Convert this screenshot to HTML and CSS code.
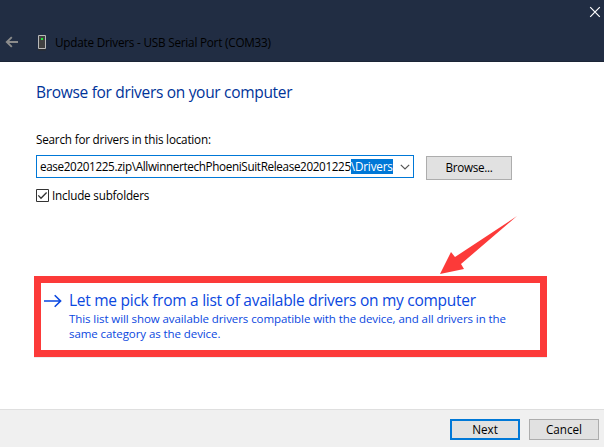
FILE: index.html
```html
<!DOCTYPE html>
<html lang="en">
<head>
<meta charset="utf-8">
<title>Update Drivers</title>
<link rel="stylesheet" href="styles.css">
</head>
<body>
<div class="window">
  <header class="titlebar">
    <div class="caption">
      <svg class="close" width="12" height="12" viewBox="0 0 12 12"><path d="M1.2 1.2 10.8 10.8M10.8 1.2 1.2 10.8"/></svg>
    </div>
    <div class="nav">
      <svg class="back" width="14" height="12" viewBox="0 0 14 12"><path d="M13 6H2M6.8 1.1 1.8 6l5 4.9"/></svg>
      <svg class="device" width="9" height="16" viewBox="0 0 9 16"><path fill="#2b2d31" d="M0 14h8v1.5H0z"/><path fill="#414141" stroke="#b9b9b9" d="M.5.5h7v13h-7z"/><path fill="#24e83c" d="M3 3h2v2H3z"/></svg>
      <span class="title">Update Drivers - USB Serial Port (COM33)</span>
    </div>
  </header>
  <main class="content">
    <h1 class="heading">Browse for drivers on your computer</h1>
    <label class="label">Search for drivers in this location:</label>
    <div class="search-row">
      <div class="combo"><span class="path">ease20201225.zip\AllwinnertechPhoeniSuitRelease20201225</span><span class="selected">\Drivers</span>
        <svg class="chevron" width="10" height="6" viewBox="0 0 10 6"><path d="M.8.8 5 5 9.2.8"/></svg>
      </div>
      <button class="button browse">Browse...</button>
    </div>
    <div class="check-row">
      <svg width="13" height="13" viewBox="0 0 13 13"><path class="box" d="M.5.5h12v12H.5z"/><path class="tick" d="M2.3 6.4 5 9.2l5.6-5.7"/></svg>
      <span>Include subfolders</span>
    </div>
    <section class="option">
      <svg class="go" width="18" height="14" viewBox="0 0 18 14"><path d="M0 7h16.5M10.7 1.2 16.6 7l-5.9 5.8"/></svg>
      <div class="option-text">
        <div class="option-title">Let me pick from a list of available drivers on my computer</div>
        <div class="option-note">This list will show available drivers compatible with the device, and all drivers in the<br>same category as the device.</div>
      </div>
      <svg class="pointer" width="80" height="62" viewBox="438 214 80 62"><path d="M517 216 461 264l3 5-24 5 11-22 4 5z"/></svg>
    </section>
  </main>
  <footer class="footer">
    <button class="button next">Next</button>
    <button class="button cancel">Cancel</button>
  </footer>
</div>
</body>
</html>
```
FILE: styles.css
```css
* { box-sizing: border-box; }
body { margin: 0; font: 11.7px/15px "Open Sans", "Noto Sans", sans-serif; letter-spacing: -0.2px; color: #000; }
svg { display: block; flex: none; fill: none; }
.window { width: 604px; height: 447px; display: flex; flex-direction: column; background: #fff; overflow: hidden; }
.titlebar { height: 62px; background: #212d43; border-bottom: 1px solid #1b2536; }
.caption { height: 28px; display: flex; justify-content: flex-end; padding: 6px 3px 0 0; }
.close { stroke: #fff; stroke-width: 1.2; }
.nav { display: flex; align-items: center; height: 28px; padding-left: 5px; }
.back { stroke: #8b8b8b; stroke-width: 1.9; }
.device { margin: 1px 8px 0 19px; }
.title { white-space: nowrap; }
.content { flex: 1; padding: 19px 36px 0; white-space: nowrap; }
.heading { margin: 0; font-size: 15.5px; line-height: 22px; font-weight: 400; letter-spacing: -0.31px; color: #003399; }
.label { display: block; margin-top: 29px; }
.search-row { display: flex; align-items: flex-start; margin-top: 8px; }
.combo { width: 378px; height: 23px; display: flex; align-items: center; border: 1px solid #0078d7; padding: 0 0 1px 3px; }
.path { letter-spacing: -0.35px; }
.selected { background: #0078d7; color: #fff; letter-spacing: -0.16px; }
.chevron { margin: 1px 3px 0 auto; stroke: #555; stroke-width: 1.2; }
.button { display: flex; align-items: center; justify-content: center; padding: 0; font: inherit; letter-spacing: 0; color: #000; background: #e1e1e1; border: 1px solid #adadad; }
.browse { width: 86px; height: 24px; margin: 1px 0 0 12px; padding-bottom: 1px; letter-spacing: -0.3px; }
.check-row { display: flex; align-items: center; height: 15px; margin-top: 8px; gap: 3px; }
.box { stroke: #333; }
.tick { stroke: #333; stroke-width: 1.3; }
.option { position: relative; width: 513px; height: 81px; margin: 73px 0 0 -2px; border: 7px solid #fc3a39; box-shadow: 0 1px 0 #eee; padding: 6px 0 0 3px; display: flex; color: #0a47e0; }
.go { margin-top: 5px; stroke: #0a47e0; stroke-width: 1.6; }
.option-text { margin-left: 7px; }
.option-title { font-size: 15.5px; line-height: 22px; letter-spacing: -0.27px; }
.option-note { font-size: 11.5px; line-height: 15px; letter-spacing: -0.08px; }
.pointer { position: absolute; left: 397px; top: -69px; fill: #fc3a39; }
.footer { height: 38px; background: #f0f0f0; border-top: 1px solid #dfdfdf; display: flex; justify-content: flex-end; gap: 9px; padding: 9px 5px 0 0; }
.next, .cancel { width: 70px; height: 21px; }
.next { border: 2px solid #0078d7; }
```
